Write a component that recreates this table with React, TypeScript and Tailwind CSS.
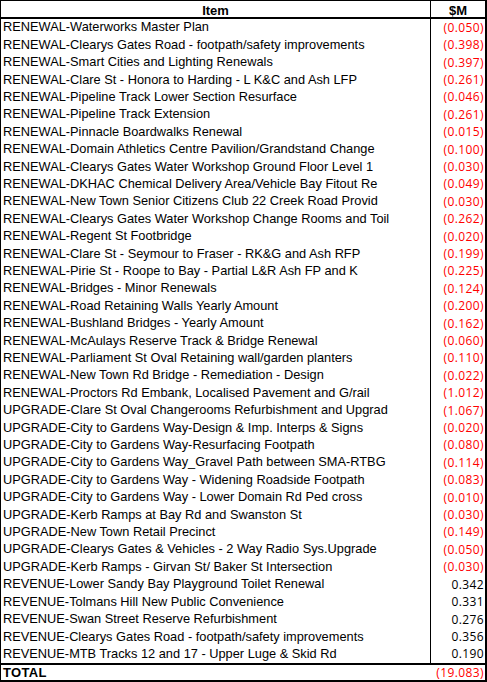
const rows: [string, string][] = [
  ['RENEWAL-Waterworks Master Plan', '(0.050)'],
  ['RENEWAL-Clearys Gates Road - footpath/safety improvements', '(0.398)'],
  ['RENEWAL-Smart Cities and Lighting Renewals', '(0.397)'],
  ['RENEWAL-Clare St - Honora to Harding - L K&C and Ash LFP', '(0.261)'],
  ['RENEWAL-Pipeline Track Lower Section Resurface', '(0.046)'],
  ['RENEWAL-Pipeline Track Extension', '(0.261)'],
  ['RENEWAL-Pinnacle Boardwalks Renewal', '(0.015)'],
  ['RENEWAL-Domain Athletics Centre Pavilion/Grandstand Change', '(0.100)'],
  ['RENEWAL-Clearys Gates Water Workshop Ground Floor Level 1', '(0.030)'],
  ['RENEWAL-DKHAC Chemical Delivery Area/Vehicle Bay Fitout Re', '(0.049)'],
  ['RENEWAL-New Town Senior Citizens Club 22 Creek Road Provid', '(0.030)'],
  ['RENEWAL-Clearys Gates Water Workshop Change Rooms and Toil', '(0.262)'],
  ['RENEWAL-Regent St Footbridge', '(0.020)'],
  ['RENEWAL-Clare St - Seymour to Fraser - RK&G and Ash RFP', '(0.199)'],
  ['RENEWAL-Pirie St - Roope to Bay - Partial L&R Ash FP and K', '(0.225)'],
  ['RENEWAL-Bridges - Minor Renewals', '(0.124)'],
  ['RENEWAL-Road Retaining Walls Yearly Amount', '(0.200)'],
  ['RENEWAL-Bushland Bridges - Yearly Amount', '(0.162)'],
  ['RENEWAL-McAulays Reserve Track & Bridge Renewal', '(0.060)'],
  ['RENEWAL-Parliament St Oval Retaining wall/garden planters', '(0.110)'],
  ['RENEWAL-New Town Rd Bridge - Remediation - Design', '(0.022)'],
  ['RENEWAL-Proctors Rd Embank, Localised Pavement and G/rail', '(1.012)'],
  ['UPGRADE-Clare St Oval Changerooms Refurbishment and Upgrad', '(1.067)'],
  ['UPGRADE-City to Gardens Way-Design & Imp. Interps & Signs', '(0.020)'],
  ['UPGRADE-City to Gardens Way-Resurfacing Footpath', '(0.080)'],
  ['UPGRADE-City to Gardens Way_Gravel Path between SMA-RTBG', '(0.114)'],
  ['UPGRADE-City to Gardens Way - Widening Roadside Footpath', '(0.083)'],
  ['UPGRADE-City to Gardens Way - Lower Domain Rd Ped cross', '(0.010)'],
  ['UPGRADE-Kerb Ramps at Bay Rd and Swanston St', '(0.030)'],
  ['UPGRADE-New Town Retail Precinct', '(0.149)'],
  ['UPGRADE-Clearys Gates & Vehicles - 2 Way Radio Sys.Upgrade', '(0.050)'],
  ['UPGRADE-Kerb Ramps - Girvan St/ Baker St Intersection', '(0.030)'],
  ['REVENUE-Lower Sandy Bay Playground Toilet Renewal', '0.342'],
  ['REVENUE-Tolmans Hill New Public Convenience', '0.331'],
  ['REVENUE-Swan Street Reserve Refurbishment', '0.276'],
  ['REVENUE-Clearys Gates Road - footpath/safety improvements', '0.356'],
  ['REVENUE-MTB Tracks 12 and 17 - Upper Luge & Skid Rd', '0.190'],
];

export default function App() {
  return (
    <div className="w-[487px] h-[682px] bg-white font-['Liberation_Sans',Arial,sans-serif] text-[12.8px] text-black">
      <div className="border-l border-t border-r-2 border-b-2 border-black">
        {/* header */}
        <div className="grid grid-cols-[430px_1fr] h-[18px] border-b-2 border-black font-bold text-[13px]">
          <div className="flex items-center justify-center border-r border-black">Item</div>
          <div className="flex items-center justify-center">$M</div>
        </div>

        {/* line items */}
        <div>
          {rows.map(([item, amount], i) => (
            <div key={i} className="grid grid-cols-[430px_1fr] h-[17.42px] leading-none">
              <div className="flex items-center pl-[2px] border-r border-black whitespace-nowrap overflow-hidden">
                {item}
              </div>
              <div
                className={`flex items-center justify-end pr-[1px] font-['Open_Sans',sans-serif] text-[12px] tracking-[0.4px] ${
                  amount.startsWith('(') ? 'text-[#ff0000]' : 'text-black'
                }`}
              >
                {amount}
              </div>
            </div>
          ))}
        </div>

        {/* total */}
        <div className="flex items-center justify-between h-[17px] border-t-2 border-black">
          <span className="pl-[2px] font-bold text-[13px] tracking-[0.3px]">TOTAL</span>
          <span className="pr-[1px] font-['Open_Sans',sans-serif] text-[12px] tracking-[0.4px] text-[#ff0000]">(19.083)</span>
        </div>
      </div>
    </div>
  );
}
